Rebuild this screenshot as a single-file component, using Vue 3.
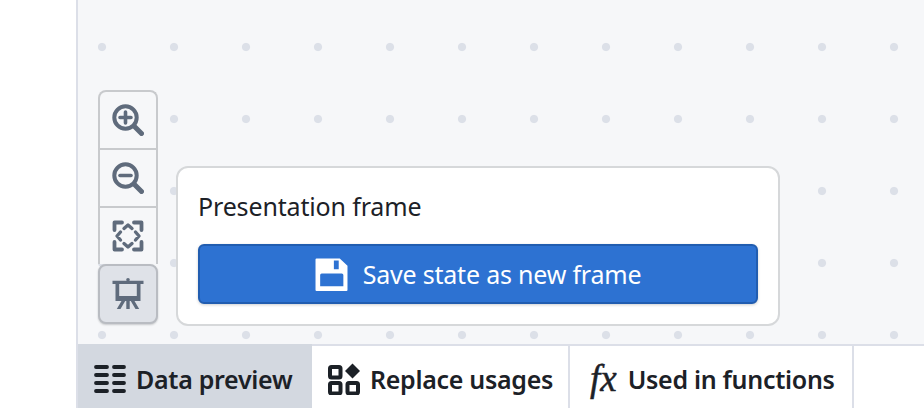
<script setup>
const tools = [
  { id: 'zoom-in', active: false },
  { id: 'zoom-out', active: false },
  { id: 'fit', active: false },
  { id: 'present', active: true }
]
</script>

<template>
  <div class="page">
    <div class="main">
      <div class="canvas">
        <div class="toolbar">
          <button v-for="t in tools" :key="t.id" type="button" class="tool" :class="{ active: t.active }">
            <svg v-if="t.id === 'zoom-in'" width="32" height="32" viewBox="0 0 32 32">
              <circle cx="13.5" cy="13.5" r="11.2" fill="none" stroke="#5f6b7c" stroke-width="4" />
              <path d="M13.5 8v11M8 13.5h11" stroke="#5f6b7c" stroke-width="3.6" stroke-linecap="round" />
              <path d="M23 23l6.500 6.500" stroke="#5f6b7c" stroke-width="5" stroke-linecap="round" />
            </svg>
            <svg v-else-if="t.id === 'zoom-out'" width="32" height="32" viewBox="0 0 32 32">
              <circle cx="13.5" cy="13.5" r="11.2" fill="none" stroke="#5f6b7c" stroke-width="4" />
              <path d="M8 13.5h11" stroke="#5f6b7c" stroke-width="3.6" stroke-linecap="round" />
              <path d="M23 23l6.500 6.500" stroke="#5f6b7c" stroke-width="5" stroke-linecap="round" />
            </svg>
            <svg v-else-if="t.id === 'fit'" width="32" height="32" viewBox="0 0 32 32">
              <path d="M2.500 10V2.500H10M22 2.500h7.500V10M29.500 22v7.500H22M10 29.500H2.500V22" fill="none" stroke="#5f6b7c" stroke-width="3.800" stroke-linecap="round" stroke-linejoin="round" />
              <path d="M12 8.500L16 5l4 3.500M23.500 12l3.500 4-3.500 4M20 23.500L16 27l-4-3.500M8.500 20L5 16l3.500-4" fill="none" stroke="#5f6b7c" stroke-width="3.400" stroke-linecap="round" stroke-linejoin="round" />
            </svg>
            <svg v-else width="32" height="32" viewBox="0 0 32 32">
              <path fill-rule="evenodd" d="M0.500 2.700h31V6h-3v17H3.500V6h-3zM7.200 6v12h17.600V6z" fill="#5f6b7c" />
              <circle cx="16" cy="1.800" r="1.800" fill="#5f6b7c" />
              <path d="M14.300 23h3.400v8h-3.400zM9.500 23h3.700l-4.700 8H4.800zM18.800 23h3.700l4.700 8h-3.700z" fill="#5f6b7c" />
            </svg>
          </button>
        </div>

        <div class="popover">
          <div class="popover-title">Presentation frame</div>
          <button type="button" class="save">
            <svg width="33" height="33" viewBox="0 0 32 32">
              <path fill-rule="evenodd" d="M0.500 1.500a1 1 0 0 1 1-1h22.500l7.500 7V31a1 1 0 0 1-1 1H1.500a1 1 0 0 1-1-1zM18.300 2.500v8.500h4.700V2.500zM5 16.500V27.500h22.500V16.500a1.500 1.500 0 0 0-1.500-1.500H6.500a1.500 1.500 0 0 0-1.500 1.500z" fill="#fff" />
            </svg>
            <span>Save state as new frame</span>
          </button>
        </div>
      </div>

      <div class="tabs">
        <div class="tab selected">
          <svg width="32" height="28" viewBox="0 0 32 28">
            <path d="M2 2h11M20 2h10M2 10h11M20 10h10M2 18h11M20 18h10M2 26h11M20 26h10" stroke="#1c2127" stroke-width="3.800" stroke-linecap="round" />
          </svg>
          <span>Data preview</span>
        </div>
        <div class="tab">
          <svg width="32" height="32" viewBox="0 0 32 32">
            <rect x="2" y="4" width="10.500" height="10.500" rx="1.500" fill="none" stroke="#1c2127" stroke-width="4" />
            <rect x="2" y="20" width="10.500" height="10.500" rx="1.500" fill="none" stroke="#1c2127" stroke-width="4" />
            <rect x="19.500" y="20" width="10.500" height="10.500" rx="1.500" fill="none" stroke="#1c2127" stroke-width="4" />
            <path d="M24.500 0.500L32 8 24.500 15.500 17 8z" fill="#1c2127" />
          </svg>
          <span>Replace usages</span>
        </div>
        <div class="tab fx-tab">
          <span class="fx">fx</span>
          <span>Used in functions</span>
        </div>
      </div>
    </div>
  </div>
</template>

<style>
html,
body {
  margin: 0;
  background: #fff;
}
</style>

<style scoped>
.page {
  width: 924px;
  height: 408px;
  padding-left: 76px;
  box-sizing: border-box;
  overflow: hidden;
  font-family: "Noto Sans", "Open Sans", sans-serif;
  color: #1c2127;
}

.main {
  height: 100%;
  display: flex;
  flex-direction: column;
  border-left: 2px solid #dcdfe8;
}

.canvas {
  position: relative;
  flex: 1;
  background-color: #f6f7f9;
  background-image: radial-gradient(circle at center, #dce0e8 3.6px, rgba(220, 224, 232, 0) 4.600px);
  background-size: 72px 72px;
  background-position: -12px 11px;
  border-bottom: 2px solid #dcdfe8;
}

.toolbar {
  position: absolute;
  left: 20px;
  top: 90px;
  width: 60px;
  display: flex;
  flex-direction: column;
}

.tool {
  height: 58px;
  padding: 0;
  display: flex;
  align-items: center;
  justify-content: center;
  box-sizing: border-box;
  background: #f6f7f9;
  border: 2px solid #c8cacd;
  border-bottom-width: 0;
}

.tool:first-child {
  border-radius: 8px 8px 0 0;
}

.tool.active {
  height: 60px;
  background: #dfe2e8;
  border: 2px solid #b9bcc2;
  border-radius: 8px;
  box-shadow: 0 1px 2px rgba(17, 20, 24, 0.2);
}

.popover {
  position: absolute;
  left: 98px;
  top: 166px;
  width: 604px;
  height: 160px;
  box-sizing: border-box;
  padding: 20px;
  background: #fff;
  border: 2px solid #d6d8da;
  border-radius: 12px;
}

.popover-title {
  height: 38px;
  font-size: 25px;
  line-height: 36px;
  letter-spacing: -0.15px;
  margin-bottom: 18px;
}

.save {
  width: 100%;
  height: 60px;
  display: flex;
  align-items: center;
  justify-content: center;
  gap: 15px;
  padding: 0;
  box-sizing: border-box;
  background: #2d72d2;
  border: 2px solid #215db0;
  border-radius: 6px;
  box-shadow: 0 1px 3px rgba(17, 20, 24, 0.2);
  color: #fff;
  font-family: inherit;
  font-size: 25px;
  letter-spacing: -0.2px;
}

.tabs {
  height: 62px;
  display: flex;
}

.tab {
  display: flex;
  align-items: center;
  gap: 10px;
  box-sizing: border-box;
  padding: 3px 0 0 16px;
  font-size: 25px;
  font-weight: 600;
  letter-spacing: -0.3px;
  border-right: 2px solid #dcdfe8;
}

.tab:nth-child(1) {
  width: 234px;
}

.tab:nth-child(2) {
  width: 258px;
}

.tab:nth-child(3) {
  width: 284px;
}

.tab.selected {
  position: relative;
  margin-top: -2px;
  padding-top: 5px;
  background: #d3d8e0;
  border-right: 0;
}

.tab.fx-tab {
  gap: 11px;
  padding-left: 20px;
}

.fx {
  font-family: "Liberation Serif", serif;
  font-style: italic;
  font-size: 37px;
  font-weight: 400;
  letter-spacing: 0;
  line-height: 32px;
  -webkit-text-stroke: 0.5px #1c2127;
}
</style>
